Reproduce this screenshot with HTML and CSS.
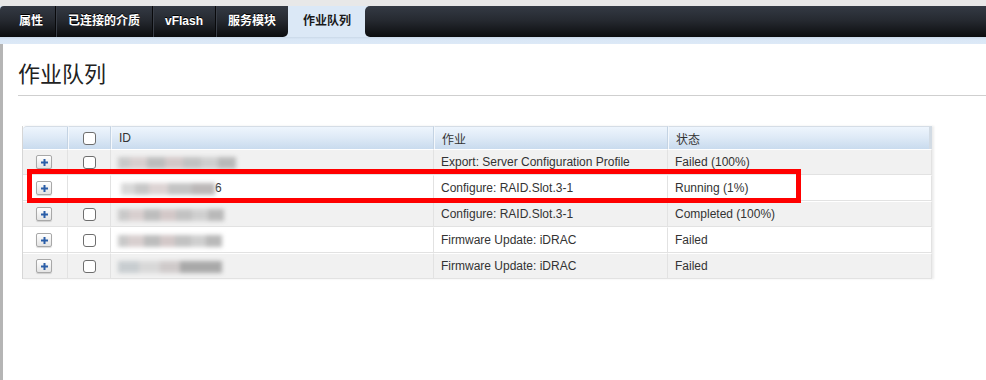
FILE: index.html
```html
<!DOCTYPE html>
<html lang="zh-CN">
<head>
    <meta charset="UTF-8">
    <title>作业队列</title>
    <link rel="stylesheet" href="styles.css">
</head>
<body>
    <div class="topbar">
        <div class="tabs">
            <div class="tab first">属性</div>
            <div class="tab">已连接的介质</div>
            <div class="tab">vFlash</div>
            <div class="tab before-active">服务模块</div>
            <div class="tab active">作业队列</div>
            <div class="tab-fill"></div>
        </div>
    </div>
    <div class="subbar"></div>

    <div class="page">
        <h1 class="title">作业队列</h1>
        <div class="rule"></div>

        <div class="grid-wrap">
            <table class="jobs">
                <colgroup>
                    <col style="width:45px">
                    <col style="width:43px">
                    <col style="width:323px">
                    <col style="width:234px">
                    <col>
                </colgroup>
                <thead>
                    <tr>
                        <th></th>
                        <th class="c-check"><span class="check"></span></th>
                        <th>ID</th>
                        <th>作业</th>
                        <th>状态</th>
                    </tr>
                </thead>
                <tbody>
                    <tr class="odd">
                        <td class="c-plus"><span class="plus"><svg width="7" height="7" viewBox="0 0 7 7"><path d="M3.5 0v7M0 3.5h7" stroke="#2b5ea8" stroke-width="2"/></svg></span></td>
                        <td class="c-check"><span class="check"></span></td>
                        <td><span class="blur b1"></span></td>
                        <td>Export: Server Configuration Profile</td>
                        <td>Failed (100%)</td>
                    </tr>
                    <tr>
                        <td class="c-plus"><span class="plus"><svg width="7" height="7" viewBox="0 0 7 7"><path d="M3.5 0v7M0 3.5h7" stroke="#2b5ea8" stroke-width="2"/></svg></span></td>
                        <td class="c-check"></td>
                        <td><span class="blur b2"></span>6</td>
                        <td>Configure: RAID.Slot.3-1</td>
                        <td>Running (1%)</td>
                    </tr>
                    <tr class="odd">
                        <td class="c-plus"><span class="plus"><svg width="7" height="7" viewBox="0 0 7 7"><path d="M3.5 0v7M0 3.5h7" stroke="#2b5ea8" stroke-width="2"/></svg></span></td>
                        <td class="c-check"><span class="check"></span></td>
                        <td><span class="blur b3"></span></td>
                        <td>Configure: RAID.Slot.3-1</td>
                        <td>Completed (100%)</td>
                    </tr>
                    <tr>
                        <td class="c-plus"><span class="plus"><svg width="7" height="7" viewBox="0 0 7 7"><path d="M3.5 0v7M0 3.5h7" stroke="#2b5ea8" stroke-width="2"/></svg></span></td>
                        <td class="c-check"><span class="check"></span></td>
                        <td><span class="blur b4"></span></td>
                        <td>Firmware Update: iDRAC</td>
                        <td>Failed</td>
                    </tr>
                    <tr class="odd">
                        <td class="c-plus"><span class="plus"><svg width="7" height="7" viewBox="0 0 7 7"><path d="M3.5 0v7M0 3.5h7" stroke="#2b5ea8" stroke-width="2"/></svg></span></td>
                        <td class="c-check"><span class="check"></span></td>
                        <td><span class="blur b5"></span></td>
                        <td>Firmware Update: iDRAC</td>
                        <td>Failed</td>
                    </tr>
                </tbody>
            </table>
            <div class="mark"></div>
        </div>
    </div>
</body>
</html>
```

FILE: styles.css
```css
* {
    margin: 0;
    padding: 0;
    box-sizing: border-box;
}

body {
    font-family: 'Liberation Sans', Arial, 'Noto Sans CJK SC', sans-serif;
    font-size: 12px;
    color: #333;
    background: white;
    width: 986px;
    height: 380px;
    overflow: hidden;
}

.topbar {
    background: #e8e8e8;
    padding-top: 6px;
}

.tabs {
    display: flex;
    height: 31px;
    background: #dbe8f6;
}

.tab {
    padding: 0 12px;
    line-height: 31px;
    color: #fff;
    font-weight: bold;
    text-shadow: 0 -1px 0 #000;
    background: linear-gradient(#343a44 0%, #262a31 45%, #0c0d0f 100%);
    border-right: 1px solid #08090b;
    box-shadow: inset 1px 0 0 #3a3f48;
}

.tab.first {
    padding-left: 19px;
    border-top-left-radius: 4px;
    box-shadow: none;
}

.tab.before-active {
    border-right: none;
    border-bottom-right-radius: 5px;
}

.tab.active {
    background: #dbe8f6;
    color: #1a1a1a;
    text-shadow: none;
    border-right: none;
    box-shadow: none;
    padding: 0 14px 0 15px;
}

.tab-fill {
    flex: 1;
    background: linear-gradient(#343a44 0%, #262a31 45%, #0c0d0f 100%);
    border-radius: 5px 0 0 5px;
}

.subbar {
    height: 7px;
    background: linear-gradient(#c9d8e8 0%, #d9e7f6 30%, #dde9f7 100%);
}

.page {
    border-left: 3px solid #b5b5b5;
    padding: 15px 0 0 15px;
    height: 336px;
}

.title {
    font-family: 'Noto Sans CJK SC', sans-serif;
    font-size: 22px;
    font-weight: 400;
    line-height: 26px;
    color: #222;
}

.rule {
    height: 1px;
    background: #cfcfcf;
    margin-top: 10px;
}

.grid-wrap {
    position: relative;
    margin: 30px 0 0 4px;
    width: 912px;
}

.jobs {
    width: 910px;
    border-collapse: separate;
    border-spacing: 0;
    table-layout: fixed;
    border-left: 1px solid #d6d6d6;
    box-shadow: 2px 0 2px rgba(0, 0, 0, 0.08);
}

.jobs th {
    height: 23px;
    text-align: left;
    font-weight: normal;
    color: #333;
    padding-left: 7px;
    background: linear-gradient(#eef5fd 0%, #dde9f6 50%, #c9dbee 100%);
    border-top: 1px solid #d5dde6;
    border-left: 1px solid #f4f8fc;
    border-right: 1px solid #c4d3e3;
}

.jobs th:first-child {
    border-top-left-radius: 4px;
    border-left: none;
}

.jobs th:last-child {
    border-right: 3px solid #d2dbe4;
}

.jobs td {
    height: 26px;
    padding-left: 7px;
    background: #fff;
    border-top: 1px solid #fff;
    border-bottom: 1px solid #e2e2e2;
    border-right: 1px solid #e2e2e2;
    white-space: nowrap;
    overflow: hidden;
}

.jobs tr.odd td {
    background: #f1f1f1;
}

.jobs td.c-plus {
    padding-left: 13px;
}

.jobs .c-check {
    text-align: center;
    padding-left: 0;
}

.check {
    display: inline-block;
    width: 13px;
    height: 13px;
    border: 1px solid #6e6e6e;
    border-radius: 3px;
    background: #fff;
    vertical-align: middle;
}

.plus {
    display: inline-flex;
    align-items: center;
    justify-content: center;
    width: 16px;
    height: 14px;
    border: 1px solid #a8a8a8;
    border-radius: 2px;
    background: linear-gradient(#ffffff, #e4e4e4);
    box-shadow: 0 1px 1px rgba(0, 0, 0, 0.15);
    vertical-align: middle;
}

.blur {
    display: inline-block;
    height: 12px;
    vertical-align: middle;
    filter: blur(2px);
    background: linear-gradient(90deg, #c9c9c9 0 10%, #d8cfcf 10% 25%, #bdbdbd 25% 40%, #d3c8c8 40% 55%, #c2c2c2 55% 70%, #cfcfcf 70% 85%, #b9b9b9 85% 100%);
}

.b1 { width: 118px; }
.b2 { width: 94px; margin-left: 3px; background: linear-gradient(90deg, #d9d9d9 0 15%, #c8c8c8 15% 30%, #ddd4d4 30% 50%, #c4c4c4 50% 75%, #bcb8b8 75% 100%); }
.b3 { width: 106px; }
.b4 { width: 104px; }
.b5 { width: 104px; background: linear-gradient(90deg, #c8cdd0 0 20%, #d8d8d8 20% 40%, #cfcaca 40% 60%, #a9a9a9 60% 100%); }

.mark {
    position: absolute;
    left: 5px;
    top: 43px;
    width: 774px;
    height: 34px;
    border: 5px solid #ff0000;
}
```
